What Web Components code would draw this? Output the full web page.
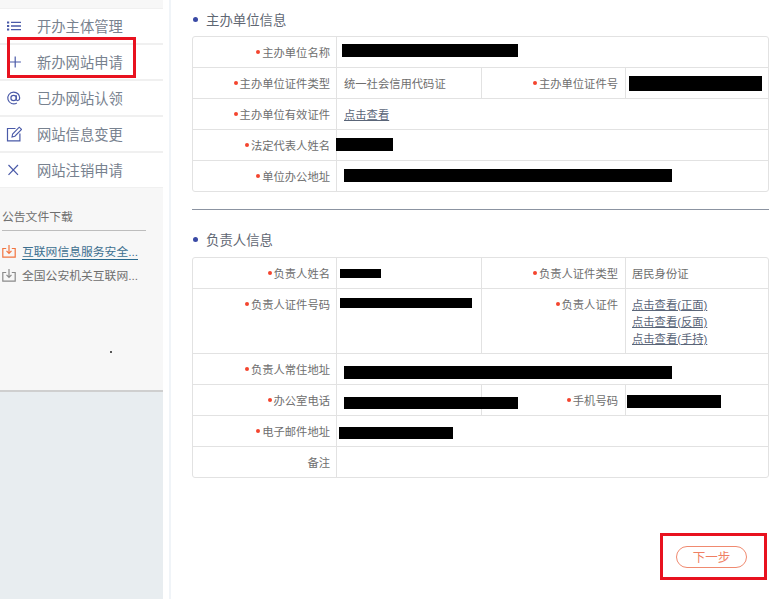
<!DOCTYPE html>
<html lang="zh">
<head>
<meta charset="utf-8">
<title>新办网站申请</title>
<style>
    html, body { margin: 0; height: 100%; background: #fff; }
    body { font-family: "Liberation Sans", "Noto Sans CJK SC", sans-serif; overflow: hidden; }
</style>
</head>
<body>

<app-shell>
    <side-bar slot="side">
        <nav-item icon="list">开办主体管理</nav-item>
        <nav-item icon="plus" marked>新办网站申请</nav-item>
        <nav-item icon="at">已办网站认领</nav-item>
        <nav-item icon="edit">网站信息变更</nav-item>
        <nav-item icon="close">网站注销申请</nav-item>
        <file-list slot="files">
            <file-item active>互联网信息服务安全...</file-item>
            <file-item>全国公安机关互联网...</file-item>
        </file-list>
    </side-bar>

    <section-title style="margin-top:13px">主办单位信息</section-title>
    <info-table style="margin-top:7px">
        <info-row>
            <info-cell label="主办单位名称" required span="3"><black-bar w="176" h="13" dx="-2" dy="-1"></black-bar></info-cell>
        </info-row>
        <info-row>
            <info-cell label="主办单位证件类型" required>统一社会信用代码证</info-cell>
            <info-cell label="主办单位证件号" required><black-bar w="133" h="15" dx="-3"></black-bar></info-cell>
        </info-row>
        <info-row>
            <info-cell label="主办单位有效证件" required span="3"><a href="#">点击查看</a></info-cell>
        </info-row>
        <info-row>
            <info-cell label="法定代表人姓名" required span="3"><black-bar w="57" h="13" dx="-8"></black-bar></info-cell>
        </info-row>
        <info-row>
            <info-cell label="单位办公地址" required span="3"><black-bar w="328" h="13"></black-bar></info-cell>
        </info-row>
    </info-table>

    <hr-line></hr-line>

    <section-title style="margin-top:23px">负责人信息</section-title>
    <info-table style="margin-top:8px">
        <info-row>
            <info-cell label="负责人姓名" required><black-bar w="41" h="9" dx="-4" dy="3"></black-bar></info-cell>
            <info-cell label="负责人证件类型" required>居民身份证</info-cell>
        </info-row>
        <info-row tall>
            <info-cell label="负责人证件号码" required><black-bar w="132" h="10" dx="-4" dy="1"></black-bar></info-cell>
            <info-cell label="负责人证件" required>
                <a href="#">点击查看(正面)</a><br><a href="#">点击查看(反面)</a><br><a href="#">点击查看(手持)</a>
            </info-cell>
        </info-row>
        <info-row>
            <info-cell label="负责人常住地址" required span="3"><black-bar w="328" h="13" dy="4"></black-bar></info-cell>
        </info-row>
        <info-row>
            <info-cell label="办公室电话" required><black-bar w="174" h="12" dy="4"></black-bar></info-cell>
            <info-cell label="手机号码" required><black-bar w="94" h="13" dx="-5" dy="2"></black-bar></info-cell>
        </info-row>
        <info-row>
            <info-cell label="电子邮件地址" required span="3"><black-bar w="114" h="12" dx="-5" dy="3"></black-bar></info-cell>
        </info-row>
        <info-row>
            <info-cell label="备注" span="3"></info-cell>
        </info-row>
    </info-table>

    <next-step></next-step>
</app-shell>

<script>
(function() {
    "use strict";

    const icons = {
        list: '<path d="M1 3.4h2.2v2H1zM1 7h2.2v2H1zM1 10.6h2.2v2H1z" fill="currentColor"/><path d="M5 4.4h10M5 8h10M5 11.6h10" stroke="currentColor" stroke-width="1.4" fill="none"/>',
        plus: '<path d="M9.2 2.5v11M3.5 8h11.4" stroke="currentColor" stroke-width="1.2" fill="none"/>',
        at: '<circle cx="7.6" cy="8" r="2.7" stroke="currentColor" stroke-width="1.2" fill="none"/><path d="M10.3 5.2v4.2c0 1.7 3.4 1.7 3.4-1.4 0-3.4-2.7-5.9-6.1-5.9a5.9 5.9 0 1 0 3.2 10.9" stroke="currentColor" stroke-width="1.2" fill="none"/>',
        edit: '<path d="M9.5 2.5H1.5v12.4h12.4V7.5" stroke="currentColor" stroke-width="1.2" fill="none"/><path d="M6 11l.6-3L13.2 1.2l2.3 2.2L8.9 10.2z" stroke="currentColor" stroke-width="1.1" fill="none"/>',
        close: '<path d="M2.5 3l9.5 9.8M12 3l-9.5 9.8" stroke="currentColor" stroke-width="1.2" fill="none"/>'
    };

    class AppShell extends HTMLElement {
        constructor() {
            super();
            this.attachShadow({mode: 'open'}).innerHTML = `
                <style>
                    :host { display: grid; grid-template-columns: 163px 1fr; height: 599px; width: 780px; }
                    #side { background: #e8edf0; min-width: 0; }
                    #main { padding-left: 6px; min-width: 0; }
                    #inner { border-left: 2px solid #f0f4f8; height: 100%; padding: 0 10px 0 21px; box-sizing: border-box; display: flow-root; }
                </style>
                <div id="side"><slot name="side"></slot></div>
                <div id="main"><div id="inner"><slot></slot></div></div>
            `;
        }
    }

    class SideBar extends HTMLElement {
        constructor() {
            super();
            this.attachShadow({mode: 'open'}).innerHTML = `
                <style>
                    :host { display: block; background: #f7f7f7; height: 392px; box-sizing: border-box; border-bottom: 2px solid #cfcfcf; padding-top: 8px; }
                    #items { display: flex; flex-direction: column; }
                </style>
                <div id="items"><slot></slot></div>
                <slot name="files"></slot>
            `;
        }
    }

    class NavItem extends HTMLElement {
        constructor() {
            super();
            const name = this.getAttribute('icon');
            this.attachShadow({mode: 'open'}).innerHTML = `
                <style>
                    :host { display: block; height: 36px; box-sizing: border-box; position: relative; }
                    #row { height: 100%; display: flex; align-items: center; background: #fff; border-top: 1px solid #f0f0f0; border-bottom: 1px solid #f0f0f0; box-sizing: border-box; font-size: 14.3px; color: #78828f; }
                    #row span { margin-top: -2px; }
                    svg { width: 16px; height: 16px; margin-left: 6px; margin-right: 15px; color: #4a5aa8; flex: none; }
                    #mark { display: none; position: absolute; z-index: 1; left: 7px; top: -7px; width: 129px; height: 41px; border: 3px solid #e8121f; box-sizing: border-box; }
                    :host([marked]) { z-index: 1; }
                    :host([marked]) #mark { display: block; }
                </style>
                <div id="row"><svg viewBox="0 0 16 16">${icons[name] || ''}</svg><span><slot></slot></span></div>
                <div id="mark"></div>
            `;
        }
    }

    class FileList extends HTMLElement {
        constructor() {
            super();
            this.attachShadow({mode: 'open'}).innerHTML = `
                <style>
                    :host { display: block; padding: 21px 0 0 2px; }
                    h4 { margin: 0; width: 144px; height: 21px; font-weight: normal; font-size: 11.8px; line-height: 16px; color: #6e6e6e; border-bottom: 1px solid #bdbdbd; }
                    #files { margin-top: 10px; display: flex; flex-direction: column; gap: 3.5px; }
                    #dot { width: 2px; height: 2px; background: #222; border-radius: 50%; margin: 66px 0 0 108px; }
                </style>
                <h4>公告文件下载</h4>
                <div id="files"><slot></slot></div>
                <div id="dot"></div>
            `;
        }
    }

    class FileItem extends HTMLElement {
        constructor() {
            super();
            this.attachShadow({mode: 'open'}).innerHTML = `
                <style>
                    :host { display: flex; align-items: center; height: 20px; font-size: 11.8px; color: #6e6e6e; }
                    svg { width: 14px; height: 14px; margin-right: 6px; flex: none; color: #8a8a8a; }
                    :host([active]) svg { color: #f2743f; }
                    :host([active]) span { color: #3d6f8f; border-bottom: 1px solid #2a6a8f; }
                </style>
                <svg viewBox="0 0 14 14"><path d="M4.2 4.5H.8v8.7h12.4V4.5H9.8" stroke="currentColor" stroke-width="1.2" fill="none"/><path d="M7 1v8.2M4.5 6.8L7 9.3l2.5-2.5" stroke="currentColor" stroke-width="1.2" fill="none"/></svg>
                <span><slot></slot></span>
            `;
        }
    }

    class SectionTitle extends HTMLElement {
        constructor() {
            super();
            this.attachShadow({mode: 'open'}).innerHTML = `
                <style>
                    :host { display: flex; align-items: center; height: 16px; font-size: 13.4px; line-height: 16px; color: #5f6773; }
                    i { width: 5px; height: 5px; border-radius: 50%; background: #3a4aa5; margin: 0 8px 0 1px; position: relative; top: -2px; }
                </style>
                <i></i><slot></slot>
            `;
        }
    }

    class InfoTable extends HTMLElement {
        constructor() {
            super();
            this.attachShadow({mode: 'open'}).innerHTML = `
                <style>
                    :host { display: block; border: 1px solid #e2e2e2; border-radius: 3px; width: 577px; box-sizing: border-box; }
                </style>
                <slot></slot>
            `;
        }
    }

    class InfoRow extends HTMLElement {
        constructor() {
            super();
            this.attachShadow({mode: 'open'}).innerHTML = `
                <style>
                    :host { display: grid; grid-template-columns: 144px 144px 145px 1fr; height: 31px; box-sizing: border-box; border-top: 1px solid #e2e2e2; }
                    :host(:first-child) { border-top: 0; height: 30px; }
                    :host([tall]) { height: 65px; }
                </style>
                <slot></slot>
            `;
        }
    }

    class InfoCell extends HTMLElement {
        constructor() {
            super();
            const req = this.hasAttribute('required');
            this.attachShadow({mode: 'open'}).innerHTML = `
                <style>
                    :host { display: grid; grid-template-columns: subgrid; grid-column: span 2; min-width: 0; }
                    :host([span]) { grid-column: span 4; }
                    #label { grid-column: 1; display: block; box-sizing: border-box; padding: 8px 6px 0 0; text-align: right; font-size: 11.3px; line-height: 16px; color: #6e6e6e; border-right: 1px solid #e2e2e2; }
                    #label i { display: inline-block; width: 4px; height: 4px; border-radius: 50%; background: #f4442e; margin-right: 2px; vertical-align: 3px; }
                    #value { grid-column: 2 / -1; box-sizing: border-box; padding: 8px 7px 0 7px; font-size: 11.3px; line-height: 17px; color: #6e6e6e; min-width: 0; }
                    ::slotted(a) { color: #5a6578; text-decoration: underline; }
                    :host(:not([span]):not(:first-child)) #label { border-left: 1px solid #e2e2e2; padding-right: 7px; }
                    :host(:not([span]):not(:first-child)) #value { padding-left: 6px; }
                </style>
                <div id="label">${req ? '<i></i>' : ''}${this.getAttribute('label')}</div>
                <div id="value"><slot></slot></div>
            `;
        }
    }

    // sits over the cell borders, like the redaction marks in the screenshot
    class BlackBar extends HTMLElement {
        constructor() {
            super();
            const w = this.getAttribute('w');
            const h = this.getAttribute('h');
            const dx = this.getAttribute('dx') || 0;
            const dy = this.getAttribute('dy') || 0;
            this.attachShadow({mode: 'open'}).innerHTML = `
                <style>
                    :host { display: block; position: relative; z-index: 1; width: ${w}px; height: ${h}px; background: #000; margin-left: ${dx}px; margin-top: ${dy}px; }
                </style>
            `;
        }
    }

    class HrLine extends HTMLElement {
        constructor() {
            super();
            this.attachShadow({mode: 'open'}).innerHTML = `
                <style>
                    :host { display: block; width: 577px; height: 1px; background: #8b93a1; margin-top: 17px; }
                </style>
            `;
        }
    }

    class NextStep extends HTMLElement {
        constructor() {
            super();
            this.attachShadow({mode: 'open'}).innerHTML = `
                <style>
                    :host { display: flex; justify-content: center; align-items: center; width: 107px; height: 47px; box-sizing: border-box; border: 3px solid #e8121f; padding-right: 4px; margin: 55px 0 0 468px; }
                    button { width: 71px; height: 22px; border: 1px solid #f08a70; border-radius: 11px; background: #fff; color: #ef7f63; font: 12.5px "Liberation Sans", "Noto Sans CJK SC", sans-serif; padding: 0; }
                </style>
                <button type="button">下一步</button>
            `;
        }
    }

    customElements.define('app-shell', AppShell);
    customElements.define('side-bar', SideBar);
    customElements.define('nav-item', NavItem);
    customElements.define('file-list', FileList);
    customElements.define('file-item', FileItem);
    customElements.define('section-title', SectionTitle);
    customElements.define('info-table', InfoTable);
    customElements.define('info-row', InfoRow);
    customElements.define('info-cell', InfoCell);
    customElements.define('black-bar', BlackBar);
    customElements.define('hr-line', HrLine);
    customElements.define('next-step', NextStep);
})();
</script>
</body>
</html>
